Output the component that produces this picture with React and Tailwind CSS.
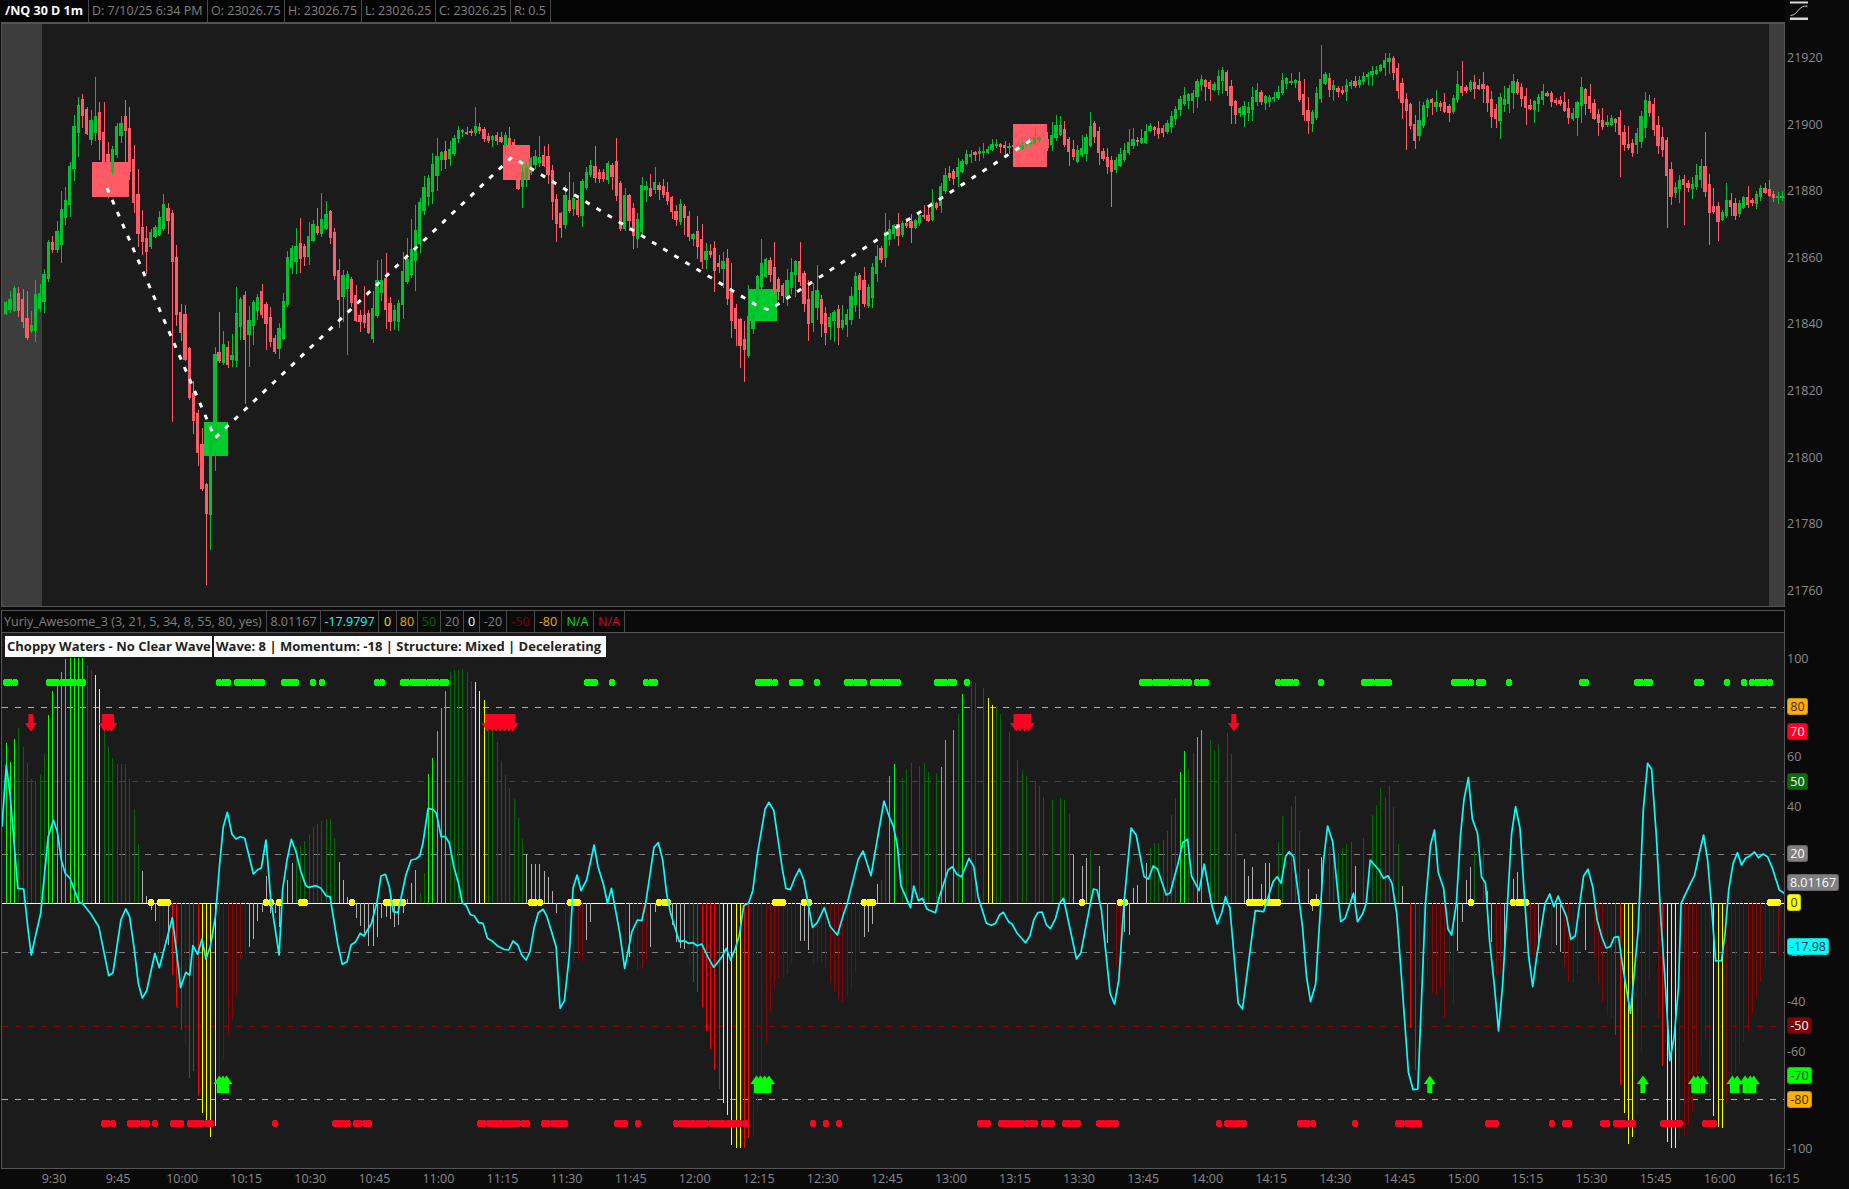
import React from "react";

const PRICE_PATH = "7,303 10,305 14,292 18,303 23,320 27,330 32,328 36,303 40,297 44,278 48,248 53,246 57,238 62,213 65,207 69,180 74,128 78,105 83,113 87,133 92,123 95,113 100,137 105,165 109,172 113,148 117,135 121,125 125,123 129,157 134,200 138,233 142,240 147,243 151,233 155,230 159,227 163,213 168,212 172,250 176,310 181,323 185,350 189,395 193,411 198,443 202,485 206,517 210,465 215,355 219,357 223,350 227,357 232,358 237,317 241,303 245,331 249,323 253,307 257,296 262,307 267,323 270,339 274,349 279,337 283,308 288,263 292,252 296,254 300,250 304,258 309,240 313,225 317,232 321,223 326,214 330,227 334,267 338,293 343,279 347,280 351,297 356,318 360,320 364,317 368,334 372,323 377,285 381,277 385,303 390,313 394,317 398,310 403,280 407,268 411,258 415,243 419,218 423,193 428,185 432,177 436,158 441,152 445,157 449,157 453,143 457,131 462,132 466,132 471,133 475,127 479,127 483,137 488,140 492,137 496,137 500,143 505,138 509,140 514,165 518,183 522,180 526,172 530,163 534,157 539,161 543,157 548,170 552,197 556,217 560,230 564,200 569,207 573,200 578,213 582,187 586,173 590,167 594,173 598,175 603,180 607,173 611,163 616,183 620,225 625,200 629,215 633,232 637,238 642,188 646,190 650,190 654,185 658,187 663,193 667,197 671,210 676,218 680,208 684,210 688,238 692,232 696,238 701,258 705,258 709,248 714,265 718,268 722,257 727,285 731,312 735,315 739,342 744,353 748,325 752,322 756,285 760,277 765,257 769,268 773,283 778,288 782,298 786,288 790,275 795,268 799,270 803,292 808,322 812,300 816,295 820,310 824,330 829,322 833,308 837,325 841,322 846,320 850,315 854,282 859,285 863,302 867,308 871,275 876,255 880,258 884,242 889,232 893,225 898,235 901,228 905,222 910,228 914,225 918,218 922,212 927,225 931,202 935,207 939,198 944,177 949,175 952,177 957,172 961,165 965,157 970,154 974,154 978,152 982,151 986,153 991,145 995,144 999,144 1003,147 1008,147 1012,145 1016,148 1020,148 1025,142 1029,145 1033,140 1037,137 1042,138 1046,147 1050,142 1055,130 1059,125 1063,137 1067,146 1072,158 1076,155 1080,150 1085,148 1090,128 1093,125 1097,147 1102,157 1106,160 1110,169 1114,167 1118,160 1123,155 1127,148 1131,142 1135,138 1140,145 1144,135 1148,127 1153,128 1157,130 1161,133 1165,128 1170,122 1174,113 1178,105 1182,98 1187,97 1191,100 1195,90 1199,78 1204,83 1208,86 1212,88 1217,82 1221,72 1225,75 1229,97 1234,110 1238,113 1243,110 1247,112 1252,102 1256,90 1260,101 1264,100 1268,98 1273,98 1277,98 1281,83 1285,78 1289,84 1293,79 1298,87 1302,111 1307,118 1311,117 1315,107 1319,80 1324,78 1328,87 1333,87 1337,92 1341,93 1345,89 1349,83 1353,82 1357,85 1362,77 1366,75 1370,73 1375,72 1379,68 1384,61 1388,60 1392,62 1396,77 1400,97 1405,103 1409,117 1414,138 1418,125 1422,112 1426,103 1430,102 1435,105 1439,103 1443,108 1448,112 1451,112 1456,88 1460,85 1464,93 1469,82 1473,85 1477,88 1481,83 1485,90 1490,108 1495,122 1499,103 1503,101 1507,97 1512,83 1516,87 1520,94 1524,105 1529,109 1533,105 1537,103 1541,93 1545,93 1550,98 1554,103 1559,100 1563,107 1567,115 1571,113 1575,118 1580,88 1584,97 1588,105 1592,108 1596,122 1601,123 1605,125 1609,122 1613,118 1618,122 1622,142 1627,148 1631,145 1635,144 1640,128 1644,108 1648,105 1652,118 1656,135 1661,141 1665,155 1669,183 1673,195 1677,184 1681,182 1686,187 1690,187 1695,185 1699,165 1703,173 1708,207 1712,210 1716,213 1720,221 1725,207 1729,198 1733,211 1737,215 1741,199 1745,200 1750,204 1754,202 1759,191 1762,187 1767,193 1771,196 1775,197 1780,197";

const WICKS = "95,77 125,100 78,97 173,422 206,585 210,550 219,312 244,404 249,367 739,368 714,292 837,345 824,345 654,167 1622,177 1669,228 1686,225 1720,241 1704,132 1408,150 1525,125 1583,77 1460,61 321,193 475,107 347,355 1323,45 1110,207 1708,245";

const STEP = 4.27;
const toI = (x) => Math.round((x - 6) / STEP);
const barX = (i) => 6 + STEP * i;

const pricePts = PRICE_PATH.split(" ").map((p) => p.split(",").map(Number));
const closeAt = (x) => {
  if (x <= pricePts[0][0]) return pricePts[0][1];
  for (let k = 1; k < pricePts.length; k++) {
    if (x <= pricePts[k][0]) {
      const [a, b] = pricePts[k - 1];
      const [c, d] = pricePts[k];
      return b + ((d - b) * (x - a)) / (c - a);
    }
  }
  return pricePts[pricePts.length - 1][1];
};

let seed = 12345;
const rnd = () => {
  seed = (seed * 16807) % 2147483647;
  return seed / 2147483647;
};

const wickMap = {};
WICKS.split(" ").forEach((p) => {
  const [x, y] = p.split(",").map(Number);
  wickMap[toI(x)] = y;
});

const closes = [];
for (let i = 0; i < 417; i++) closes.push(closeAt(barX(i)));
const volAt = (i) => {
  let s = 0;
  let n = 0;
  for (let j = Math.max(1, i - 3); j <= Math.min(416, i + 3); j++) {
    s += Math.abs(closes[j] - closes[j - 1]);
    n++;
  }
  return Math.min(s / n, 14);
};

const candles = [];
for (let i = 0; i < 417; i++) {
  const cx = barX(i);
  const close = closes[i];
  const open = i === 0 ? close + 6 : closes[i - 1];
  const vol = volAt(i);
  const delta = open - close;
  const up = Math.abs(delta) < vol * 0.3 ? rnd() > 0.5 : delta > 0;
  let top = Math.min(open, close) - vol * rnd() * 0.7;
  let bot = Math.max(open, close) + vol * rnd() * 0.7;
  if (bot - top < 2) bot = top + 2;
  let hi = top - (1 + rnd() * rnd() * (6 + vol * 2));
  let lo = bot + (1 + rnd() * rnd() * (6 + vol * 2));
  const ov = wickMap[i];
  if (ov !== undefined) {
    if (ov < top) hi = ov;
    else lo = ov;
  }
  const x0 = Math.round(cx - 2);
  const x1 = Math.round(cx + STEP - 2) - 1;
  candles.push({ x: x0, w: x1 - x0, wx: Math.round(cx - 0.5), top, bot, hi, lo, up });
}

const CY7 = "5,560 16,375 26,470 45,745 60,747 70,860 79,945 103,820 122,590 135,540 145,575 155,660 165,700 177,715 200,787 210,792 230,822 250,860 275,1007 286,998 306,840 318,807 328,830 340,930 350,1030 360,1074 371,1053 392,940 403,983 436,833 448,950 457,1043 470,997 480,1005 488,917 500,943 511,897 521,957 532,920 545,830 555,680 565,560 575,517 587,583 597,597 608,590 619,595 641,702 651,690 661,684 673,600 685,780 706,945 715,750 726,660 737,598 749,635 760,690 773,735 780,742 800,737 812,745 825,767 835,770 855,915 866,973 878,965 888,915 900,905 911,880 921,888 940,850 954,785 964,708 975,703 985,740 995,815 1007,818 1027,705 1040,660 1052,657 1062,648 1070,610 1083,505 1095,508 1104,520 1116,590 1127,590 1137,610 1148,680 1160,730 1170,790 1179,795 1190,824 1200,827 1211,848 1222,850 1233,895 1244,902 1258,917 1275,928 1287,930 1298,903 1310,915 1320,945 1331,960 1341,935 1351,865 1362,818 1374,808 1384,830 1407,920 1417,1105 1428,1082 1440,950 1450,743 1460,705 1470,752 1484,720 1503,615 1513,680 1527,735 1537,790 1547,745 1568,880";
const CY8 = "12,985 30,875 44,840 55,842 65,790 86,622 97,608 108,660 118,760 128,820 150,905 163,902 173,910 185,908 195,917 207,912 222,950 237,982 258,950 269,925 280,960 292,925 302,885 313,797 325,790 336,752 348,640 367,507 377,487 389,512 411,690 420,746 431,748 443,712 454,687 465,720 487,862 499,848 517,803 532,860 550,885 565,825 575,790 603,658 615,633 635,707 668,483 681,530 692,560 702,620 711,738 735,803 743,738 755,782 765,775 777,808 798,818 808,770 830,690 841,680 852,703 864,710 883,655 895,680 906,770 927,850 940,856 950,850 960,825 970,817 983,845 992,852 1005,880 1026,908 1037,887 1047,840 1057,818 1068,816 1079,855 1089,866 1102,835 1112,790 1122,775 1155,957 1166,938 1190,790 1198,747 1207,750 1218,810 1240,1060 1251,1092 1262,1020 1275,790 1293,564 1306,585 1326,710 1337,717 1349,678 1360,687 1382,765 1392,758 1412,670 1424,608 1436,598 1446,708 1465,752 1478,672 1498,800 1511,852 1522,820 1532,770 1541,800";
const CY9 = "27,800 50,1090 62,1107 97,812 120,815 146,725 157,710 168,730 181,648 190,635 202,650 227,860 238,1010 249,1085 263,1033 285,660 296,558 310,605 332,845 344,835 367,760 378,845 392,822 402,790 413,660 437,690 450,715 462,707 473,730 486,820 495,950 518,1297 531,1349 544,1347 565,790 579,615 590,570 600,697 615,745 627,867 637,885 650,790 661,590 671,478 683,413 694,538 708,580 719,710 730,730 741,900 755,1040 766,1173 777,1040 802,580 813,500 825,565 838,780 849,950 860,1040 871,950 894,790 907,762 918,800 930,768 941,800 953,830 965,898 977,888 1000,708 1012,688 1025,740 1037,840 1051,895 1062,924 1073,920 1084,892 1096,890 1107,975 1129,1120 1150,870 1164,510 1176,370 1187,388 1200,590 1213,850 1225,1040 1237,1262 1249,1190 1261,1040 1268,790 1294,730 1305,707 1318,640 1330,585 1341,660 1351,790 1363,963 1379,962 1389,880 1399,750 1411,670 1423,638 1434,675 1445,655 1457,648 1470,636 1481,653 1493,642 1506,650 1519,685 1538,750 1552,760";

const SC_A = 2.53;
const SC_B = 2.75;
const mapCy = (s, off, sc) =>
  s.split(" ").map((p) => {
    const [x, y] = p.split(",").map(Number);
    return `${(off + x / sc).toFixed(1)},${(640 + y / 3).toFixed(1)}`;
  });
const cyan = [...mapCy(CY7, 0, SC_A), ...mapCy(CY8, 620, SC_A), ...mapCy(CY9, 1220, SC_B)].join(" ");

const B7 = "B14:310 24:365 36:297 D46:265 57:322 67:370 79:418 90:423 100:403 112:343 B122:225 133:153 144:138 155:97 165:57 176:55 187:55 198:55 208:55 D218:75 229:90 Y241:105 251:148 D261:265 272:320 283:355 294:372 305:372 317:373 327:415 337:507 348:612 G360:693 370:768 380:810 390:842 d403:940 413:905 G423:915 r434:1005 446:1100 456:1170 d466:1212 r477:1313 489:1292 499:1367 Y509:1418 522:1458 532:1490 542:1457 d553:1310 564:1258 575:1185 586:1140 596:1065 607:960 618:945 G628:922 638:897 650:842 661:815 672:708 682:820 694:820 704:860 727:720 737:670 D747:620 757:618 771:603 780:585 791:560 802:552 812:542 823:538 834:538 844:595 G856:667 866:720 877:770 898:835 909:857 920:880 932:917 942:918 952:892 963:835 975:830 985:838 995:862 1005:855 1016:820 1027:778 1037:730 1048:690 D1060:760 1071:700 B1081:403 1093:355 1104:273 1114:205 1124:153 D1135:95 1146:90 1157:90 1167:88 1179:97 1190:122 Y1200:126 1210:153 1222:180 D1232:230 1243:265 1254:307 1265:363 1276:405 1286:445 1298:477 1308:535 1319:598 G1329:643 1341:672 1351:672 1362:672 1372:693 1384:712 1394:753 1404:820 d1425:950 1437:1000 1447:970 1459:960 1470:962 G1480:900 1491:845";
const B8 = "d10:950 G21:950 d31:950 42:990 53:985 64:963 G74:920 85:815 129:855 140:905 150:925 160:927 d171:975 r183:1025 193:1055 203:1100 213:1172 226:1227 236:1290 246:1347 Y257:1388 269:1425 279:1515 290:1523 302:1523 r312:1523 322:1495 d333:1487 345:1415 356:1300 366:1210 376:1113 388:1050 398:1013 408:1010 419:1003 431:970 442:937 G451:902 462:903 474:930 d485:975 495:965 507:968 517:985 528:1032 538:1055 549:1080 560:1085 571:1067 581:1048 592:1000 603:937 G613:890 624:877 635:852 646:732 D656:720 667:640 678:472 B688:408 699:372 D711:415 722:387 732:385 742:368 754:377 765:370 775:385 785:395 797:400 B808:380 818:345 828:300 840:270 D851:258 861:222 B871:162 D883:122 894:113 904:130 916:145 Y927:175 937:195 D948:205 960:210 969:222 980:260 990:275 1002:312 1012:360 1022:390 1033:408 1045:412 1055:422 1065:438 1076:470 1088:495 1098:480 1110:475 1121:480 1132:523 1142:590 G1152:645 1164:672 1174:678 1185:655 D1195:630 1207:640 G1217:678 1238:908 d1250:975 1261:1020 G1273:875 1283:885 1303:744 1314:735 1326:710 1336:670 D1346:625 1357:610 1368:608 1379:600 1390:573 1401:525 1412:475 B1422:397 1433:333 D1443:388 1455:340 B1465:292 1475:270 D1488:277 1498:300 1509:330";
const B9 = "D2:312 15:280 26:343 38:477 49:580 G62:657 73:710 84:708 95:682 108:728 119:732 130:670 141:670 155:655 D166:605 178:528 191:498 202:468 214:484 224:573 G238:687 249:778 260:812 271:762 284:650 D296:620 318:610 331:640 342:625 354:612 365:606 G378:678 390:642 D401:595 414:545 424:525 436:495 448:443 460:470 471:438 482:500 493:612 G507:738 d519:1010 r530:1165 541:1290 d553:1030 565:1155 577:1005 589:1058 601:1065 612:1045 624:1133 636:1000 648:1093 G658:932 670:845 683:720 695:682 D706:632 730:625 G741:753 753:905 d764:1005 776:1000 G787:920 812:717 824:695 d848:950 859:945 870:945 G882:930 907:920 d918:940 G928:915 940:937 d953:980 965:1025 976:1030 987:1003 G1011:930 d1024:950 1036:995 1047:1030 1058:1085 1070:1125 1082:1135 r1094:1185 1105:1335 Y1116:1418 1129:1513 1140:1490 d1151:1422 1163:1235 1176:1070 1187:1020 1200:1035 1210:1135 r1222:1277 Y1234:1505 1245:1523 1258:1523 d1270:1498 1281:1485 1292:1455 1305:1413 1317:1300 1328:1250 1340:1200 1351:1370 Y1363:1427 1374:1460 1386:1465 d1398:1390 1409:1320 1420:1300 1431:1275 1445:1205 1456:1172 1468:1120 1481:1070 1492:1025 1503:980 1514:955 1527:935 1538:945";

const COLORS = { B: "#00ff00", D: "#006a00", Y: "#ffff00", r: "#ff0000", d: "#8b0000", G: "#b0b0b0" };
const ZERO = 903;
const barMap = {};
const parseBars = (s, off, sc) => {
  let c = "G";
  s.split(" ").forEach((t) => {
    const m = t.match(/^([A-Za-z])?(\d+):(\d+)$/);
    if (m[1]) c = m[1];
    const i = toI(off + Number(m[2]) / sc);
    barMap[i] = { c: COLORS[c], y: 640 + Number(m[3]) / 3 };
  });
};
parseBars(B7, 0, SC_A);
parseBars(B8, 620, SC_A);
parseBars(B9, 1220, SC_B);
const bars = Object.entries(barMap).map(([i, b]) => {
  const x = Math.round(barX(Number(i)) - 0.5);
  const y0 = Math.min(b.y, ZERO);
  const y1 = Math.max(b.y, ZERO);
  return { x, y: Math.round(y0), h: Math.max(1, Math.round(y1 - y0)), c: b.c };
});

const parseDots = (s, off, sc) => {
  const out = [];
  s.split(" ").forEach((t) => {
    const [a, b] = t.split("-").map(Number);
    const i0 = toI(off + a / sc);
    const i1 = b === undefined ? i0 : toI(off + b / sc);
    for (let i = i0; i <= i1; i++) out.push(barX(i));
  });
  return out;
};
const dotsFrom = (a, b, c) => [...parseDots(a, 0, SC_A), ...parseDots(b, 620, SC_A), ...parseDots(c, 1220, SC_B)];

const greenDots = dotsFrom(
  "14-36 120-210 552-575 596-660 714-750 792 811 952-963 1025-1125 1480-1503 1545",
  "72-85 352-388 430-452 495 571 590-614 644-700 806-840 872 1325-1360 1378-1435 1465-1477",
  "166-203 283 400-462 645-685 707 728 800 997-1010 1150-1188 1315-1328 1397 1443 1468-1506"
);
const redDots = dotsFrom(
  "262-285 325-370 392 433-457 477-530 693 843-880 896-932 1210-1330 1372-1427 1555-1568",
  "0-12 42 138-248 266-312 483 516 548 914-926 968-1035 1054 1076-1088 1130-1163 1215-1260 1510 1540-1568",
  "24-72 224-250 377 484-543 740-765 916 950-963 1058-1070 1092-1130 1220-1260 1338-1362"
);
const yellowDots = dotsFrom(
  "381 402-424 672-684 706 758-769 887 973-1017 1340-1362 1436-1460",
  "97-118 396-409 463-474 623-635 1173 1270-1282",
  "84-155 260-272 693 810-836 1512-1538"
);

const a = (x, sc = SC_A, off = 0) => off + x / sc;
const downArrows = [
  a(78), a(264), a(273), a(282),
  a(1233), a(1245), a(1255), a(1266), a(1276), a(1287), a(1297),
  a(1002, SC_A, 620), a(1012, SC_A, 620), a(1024, SC_A, 620), a(1034, SC_A, 620),
  a(38, SC_B, 1220),
];
const upArrows = [
  a(555), a(564), a(573),
  a(345, SC_A, 620), a(355, SC_A, 620), a(366, SC_A, 620), a(377, SC_A, 620),
  a(577, SC_B, 1220), a(1163, SC_B, 1220),
  a(1303, SC_B, 1220), a(1314, SC_B, 1220), a(1328, SC_B, 1220),
  a(1409, SC_B, 1220), a(1422, SC_B, 1220), a(1444, SC_B, 1220), a(1458, SC_B, 1220), a(1468, SC_B, 1220),
];

const PRICES = [
  [21920, 58], [21900, 124.5], [21880, 191], [21860, 257.5], [21840, 324], [21820, 391], [21800, 457.5], [21780, 524], [21760, 591],
];
const TIMES = ["9:30","9:45","10:00","10:15","10:30","10:45","11:00","11:15","11:30","11:45","12:00","12:15","12:30","12:45","13:00","13:15","13:30","13:45","14:00","14:15","14:30","14:45","15:00","15:15","15:30","15:45","16:00","16:15"];
const HEAD = [
  ["/NQ 30 D 1m", "w-[87px] text-white font-bold pl-[3px]"],
  ["D: 7/10/25 6:34 PM", "w-[119px] text-[#808080] pl-[3px]"],
  ["O: 23026.75", "w-[77px] text-[#808080] pl-[3px]"],
  ["H: 23026.75", "w-[77px] text-[#808080] pl-[3px]"],
  ["L: 23026.25", "w-[74px] text-[#808080] pl-[3px]"],
  ["C: 23026.25", "w-[75px] text-[#808080] pl-[3px]"],
  ["R: 0.5", "w-[40px] text-[#808080] pl-[3px]"],
];
const STUDY = [
  ["Yuriy_Awesome_3 (3, 21, 5, 34, 8, 55, 80, yes)", "w-[265px] text-[#808080] pl-[2px]"],
  ["8.01167", "w-[54px] text-[#808080] justify-center"],
  ["-17.9797", "w-[58px] text-[#00ffff] justify-center"],
  ["0", "w-[18px] text-[#e6e600] justify-center"],
  ["80", "w-[21px] text-[#f0a800] justify-center"],
  ["50", "w-[23px] text-[#006400] justify-center"],
  ["20", "w-[23px] text-[#808080] justify-center"],
  ["0", "w-[16px] text-white justify-center"],
  ["-20", "w-[27px] text-[#808080] justify-center"],
  ["-50", "w-[28px] text-[#7a0000] justify-center"],
  ["-80", "w-[27px] text-[#f0a800] justify-center"],
  ["N/A", "w-[32px] text-[#00e000] justify-center"],
  ["N/A", "w-[31px] text-[#e00020] justify-center"],
];
const PLAIN = [
  ["100", 659], ["60", 757], ["40", 807], ["-20", 952], ["-40", 1002], ["-60", 1052], ["-100", 1149],
];
const BADGES = [
  ["80", 698, "w-[21px] bg-[#ffb000] text-[#3a2a00]"],
  ["70", 723, "w-[21px] bg-[#ff0022] text-white"],
  ["50", 773, "w-[21px] bg-[#0b6a0b] text-white"],
  ["20", 845, "w-[21px] bg-[#808080] text-white"],
  ["8.01167", 874, "w-[52px] bg-[#808080] text-white"],
  ["0", 894, "w-[14px] bg-[#ffff00] text-[#333300]"],
  ["-17.98", 938, "w-[42px] bg-[#00ffff] text-[#003333]"],
  ["-50", 1017, "w-[25px] bg-[#7a0606] text-white"],
  ["-70", 1067, "w-[25px] bg-[#00ff00] text-[#003300]"],
  ["-80", 1091, "w-[25px] bg-[#ffb000] text-[#3a2a00]"],
];
const DASHES = [
  [707, "#e0b030"], [781, "#0a6a0a"], [854, "#808080"], [952, "#808080"], [1026, "#8b0000"], [1099, "#e0b030"],
];

function App() {
  return (
    <div className="w-[1849px] h-[1189px] flex flex-col bg-[#0a0a0a] overflow-hidden text-[12.5px] leading-[16px] font-['Open_Sans','Noto_Sans',sans-serif]">
      {/* upper row */}
      <div className="flex h-[607px]">
        <div className="w-[1785px] flex flex-col">
          <div className="h-[22px] flex pl-[2px] bg-[#050505]">
            {HEAD.map(([t, c]) => (
              <div key={t} className={`${c} flex items-center border-r border-[#4a4a4a] whitespace-nowrap`}>{t}</div>
            ))}
          </div>
          <div className="ml-px flex-1 border-t-2 border-l border-r border-b border-[#555555] bg-[#1b1b1b]">
            <svg width="1782" height="582" viewBox="2 24 1782 582" className="block">
              <rect x="2" y="24" width="40" height="582" fill="#3d3d3d" />
              <rect x="1769" y="24" width="15" height="582" fill="#3d3d3d" />
              <rect x="92" y="162" width="37" height="35" fill="#ff5a66" />
              <rect x="503" y="145" width="27" height="35" fill="#ff5a66" />
              <rect x="1013" y="124" width="34" height="43" fill="#ff5a66" />
              <rect x="204" y="422" width="24" height="34" fill="#02cb2e" />
              <rect x="748" y="289" width="29" height="32" fill="#02cb2e" />
              {candles.map((k, i) => (
                <g key={i} fill={k.up ? "#02c02e" : "#ff5a66"} shapeRendering="crispEdges">
                  <rect x={k.wx} y={k.hi} width="1" height={k.lo - k.hi} />
                  <rect x={k.x} y={k.top} width={k.w} height={k.bot - k.top} />
                </g>
              ))}
              <polyline
                points="107,188 215,438 512,157 756,305 769,310 1031,140"
                fill="none"
                stroke="#ffffff"
                strokeWidth="3"
                strokeDasharray="5 8"
              />
            </svg>
          </div>
        </div>
        <div className="relative flex-1">
          <svg width="20" height="21" viewBox="0 0 20 21" className="absolute left-[5px] top-0">
            <rect x="0" y="1.5" width="18" height="2" fill="#d8d8d8" />
            <rect x="0" y="17.5" width="18" height="2.5" fill="#d8d8d8" />
            <path d="M0.5 15.5 C 5 15, 6 13, 8.5 10 C 11 7, 13 6, 17.5 6" fill="none" stroke="#c8c8c8" strokeWidth="1" />
          </svg>
          {PRICES.map(([p, y]) => (
            <div key={p} className="absolute left-[2px] text-[#8a8a8a]" style={{ top: y - 8 }}>{p}</div>
          ))}
        </div>
      </div>
      <div className="h-[3px]" />
      {/* lower row */}
      <div className="flex h-[559px]">
        <div className="w-[1785px] pl-px">
          <div className="h-full border border-[#555555] flex flex-col">
            <div className="h-[22px] flex border-b border-[#555555] bg-[#0a0a0a] shrink-0">
              {STUDY.map(([t, c], i) => (
                <div key={i} className={`${c} flex items-center border-r border-[#4a4a4a] whitespace-nowrap`}>{t}</div>
              ))}
            </div>
            <div className="relative flex-1 bg-[#1b1b1b]">
              <svg width="1782" height="535" viewBox="2 633 1782 535" className="block">
                {DASHES.map(([y, c]) => (
                  <line key={y} x1="2" x2="1784" y1={y + 0.5} y2={y + 0.5} stroke={c} strokeWidth="1" strokeDasharray="6 7" />
                ))}
                <line x1="2" x2="1784" y1="903.5" y2="903.5" stroke="#ffffff" strokeWidth="1" />
                {bars.map((b, i) => (
                  <rect key={i} x={b.x} y={b.y} width="1" height={b.h} fill={b.c} shapeRendering="crispEdges" />
                ))}
                {greenDots.map((x, i) => (
                  <circle key={i} cx={Math.round(x)} cy="682.5" r="3.4" fill="#00ff00" shapeRendering="crispEdges" />
                ))}
                {redDots.map((x, i) => (
                  <circle key={i} cx={Math.round(x)} cy="1123.5" r="3.4" fill="#ff0022" shapeRendering="crispEdges" />
                ))}
                {yellowDots.map((x, i) => (
                  <circle key={i} cx={Math.round(x)} cy="902.5" r="3.4" fill="#ffff00" shapeRendering="crispEdges" />
                ))}
                {downArrows.map((x, i) => (
                  <polygon key={i} fill="#ff0022" points={`${x - 2.5},714 ${x + 2.5},714 ${x + 2.5},723 ${x + 6},723 ${x},731.5 ${x - 6},723 ${x - 2.5},723`} />
                ))}
                {upArrows.map((x, i) => (
                  <polygon key={i} fill="#00ff00" points={`${x - 2.5},1093 ${x + 2.5},1093 ${x + 2.5},1084 ${x + 6},1084 ${x},1075.5 ${x - 6},1084 ${x - 2.5},1084`} />
                ))}
                <polyline points={cyan} fill="none" stroke="#00ffff" strokeWidth="1.7" strokeLinejoin="round" />
              </svg>
              <div className="absolute left-[3px] top-[3px] flex gap-[2px] text-[#222222] font-bold text-[13px] leading-[21px]">
                <div className="w-[207px] h-[21px] bg-white pl-[2px] whitespace-nowrap">Choppy Waters - No Clear Wave</div>
                <div className="w-[392px] h-[21px] bg-white pl-[2px] whitespace-nowrap">Wave: 8 | Momentum: -18 | Structure: Mixed | Decelerating</div>
              </div>
            </div>
          </div>
        </div>
        <div className="relative flex-1">
          {PLAIN.map(([t, y]) => (
            <div key={t} className="absolute left-[2px] text-[#8a8a8a]" style={{ top: y - 610 - 8 }}>{t}</div>
          ))}
          {BADGES.map(([t, y, c]) => (
            <div key={t} className={`absolute left-[2px] h-[17px] rounded-[3px] border border-black/20 flex items-center justify-center whitespace-nowrap ${c}`} style={{ top: y - 610 }}>{t}</div>
          ))}
        </div>
      </div>
      {/* time axis */}
      <div className="h-[20px] flex items-center pl-[22px] text-[#8a8a8a]">
        {TIMES.map((t) => (
          <div key={t} className="w-[64.07px] shrink-0 text-center">{t}</div>
        ))}
      </div>
    </div>
  );
}

export default App;
